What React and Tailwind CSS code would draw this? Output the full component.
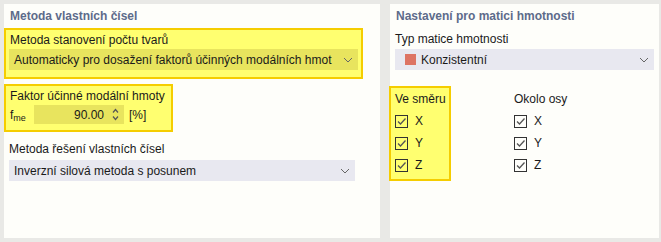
const FONT = { fontFamily: '"Liberation Sans", Arial, sans-serif' };

function Chevron() {
  return (
    <svg width="10" height="6" viewBox="0 0 10 6" className="shrink-0">
      <path d="M1 1 L5 5 L9 1" fill="none" stroke="#666" strokeWidth="1" />
    </svg>
  );
}

function Spinner() {
  return (
    <svg width="7" height="13" viewBox="0 0 7 13" className="shrink-0">
      <path d="M1 4.5 L3.5 1.5 L6 4.5" fill="none" stroke="#555" strokeWidth="1.2" />
      <path d="M1 8.5 L3.5 11.5 L6 8.5" fill="none" stroke="#555" strokeWidth="1.2" />
    </svg>
  );
}

function Check({ label }) {
  return (
    <div className="flex items-center h-[22px] gap-[7px]">
      <div className="w-[13px] h-[13px] border border-[#333] flex items-center justify-center">
        <svg width="11" height="11" viewBox="0 0 11 11">
          <path d="M2 5.5 L4.5 8 L9.5 2.5" fill="none" stroke="#555" strokeWidth="1.3" />
        </svg>
      </div>
      <span className="text-[12px] text-[#1a1a1a]">{label}</span>
    </div>
  );
}

export default function App() {
  return (
    <div
      className="w-[661px] h-[242px] bg-[#e9e9e6] pt-[4px] pl-[4px] flex gap-[10px] whitespace-nowrap"
      style={FONT}
    >
      {/* ── Left panel ── */}
      <div className="w-[376px] h-[234px] bg-[#fefefa] flex flex-col">
        <div className="h-[24px] pl-[6px] flex items-center text-[12px] font-bold text-[#5d6b8a]">
          Metoda vlastních čísel
        </div>

        <div className="w-[359px] h-[51px] bg-[#ffff70] border-2 border-[#f5cd00] px-[3px] flex flex-col">
          <div className="h-[19px] pl-[1px] flex items-center text-[12px] text-[#1a1a1a]">
            Metoda stanovení počtu tvarů
          </div>
          <div className="h-[21px] bg-[#e8e45e] pl-[5px] pr-[5px] flex items-center justify-between text-[12px] text-[#1a1a1a]">
            <span>Automaticky pro dosažení faktorů účinných modálních hmot</span>
            <Chevron />
          </div>
        </div>

        <div className="mt-[5px] w-[169px] h-[48px] bg-[#ffff70] border-2 border-[#f5cd00] px-[4px] flex flex-col">
          <div className="h-[19px] flex items-center text-[12px] text-[#1a1a1a]">
            Faktor účinné modální hmoty
          </div>
          <div className="h-[19px] flex items-center text-[12px] text-[#1a1a1a]">
            <span className="w-[24px] leading-none">
              f<sub className="text-[9px]">me</sub>
            </span>
            <div className="w-[90px] h-[19px] bg-[#e8e45e] flex items-center justify-end pr-[5px] gap-[8px]">
              <span>90.00</span>
              <Spinner />
            </div>
            <span className="ml-[5px]">[%]</span>
          </div>
        </div>

        <div className="mt-[9px] h-[16px] pl-[5px] flex items-center text-[12px] text-[#1a1a1a]">
          Metoda řešení vlastních čísel
        </div>
        <div className="mt-[3px] ml-[5px] w-[346px] h-[21px] bg-[#e8e8f0] pl-[5px] pr-[5px] flex items-center justify-between text-[12px] text-[#1a1a1a]">
          <span>Inverzní silová metoda s posunem</span>
          <Chevron />
        </div>
      </div>

      {/* ── Right panel ── */}
      <div className="w-[269px] h-[234px] bg-[#fefefa] flex flex-col">
        <div className="h-[24px] pl-[6px] flex items-center text-[12px] font-bold text-[#5d6b8a]">
          Nastavení pro matici hmotnosti
        </div>
        <div className="h-[21px] pl-[5px] flex items-center text-[12px] text-[#1a1a1a]">
          Typ matice hmotnosti
        </div>
        <div className="ml-[5px] w-[259px] h-[21px] bg-[#e8e8f0] pl-[10px] pr-[5px] flex items-center justify-between text-[12px] text-[#1a1a1a]">
          <div className="flex items-center gap-[5px]">
            <div className="w-[11px] h-[11px] bg-[#dd7363]" />
            <span>Konzistentní</span>
          </div>
          <Chevron />
        </div>

        <div className="mt-[16px] flex">
          <div className="-ml-px w-[62px] h-[95px] bg-[#ffff70] border-2 border-[#f5cd00] pl-[4px] flex flex-col">
            <div className="h-[22px] flex items-center text-[12px] text-[#1a1a1a]">Ve směru</div>
            <Check label="X" />
            <Check label="Y" />
            <Check label="Z" />
          </div>
          <div className="ml-[63px] pt-[2px] flex flex-col">
            <div className="h-[22px] flex items-center text-[12px] text-[#1a1a1a]">Okolo osy</div>
            <Check label="X" />
            <Check label="Y" />
            <Check label="Z" />
          </div>
        </div>
      </div>
    </div>
  );
}
